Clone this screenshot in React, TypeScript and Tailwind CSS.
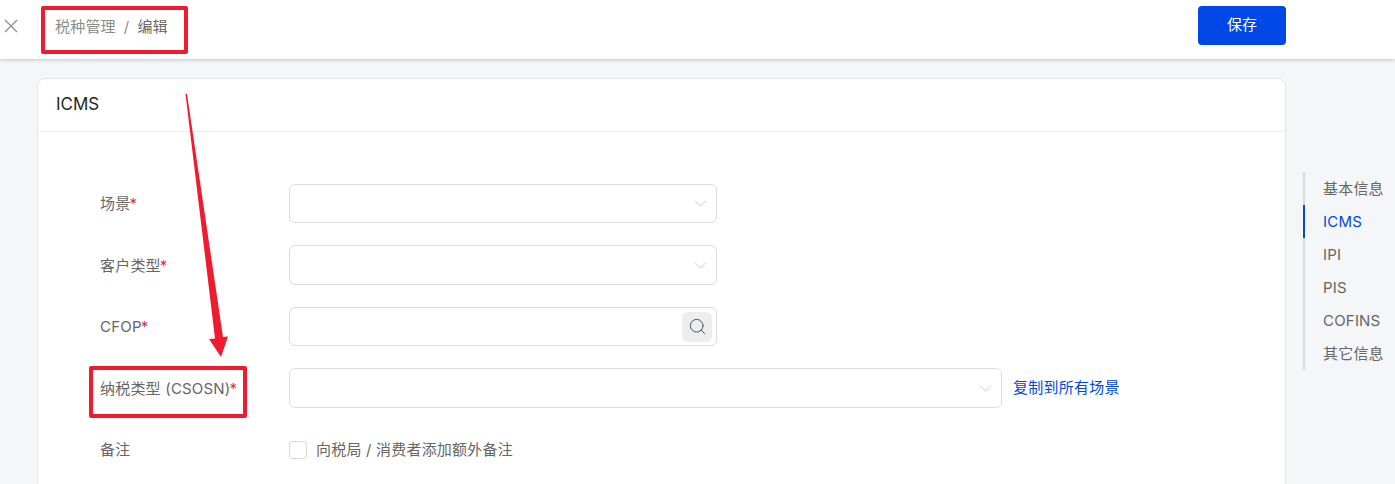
import React from 'react'
import { ChevronDown, Search } from 'lucide-react'

const font = 'font-["Inter","Noto_Sans_CJK_SC",sans-serif]'

function Label({ text }: { text: string }) {
  return (
    <div className="w-[189px] shrink-0 pt-[2px] text-[15px] tracking-[0.2px] text-[#666666]">
      {text}
      <span className="-ml-[1px] text-[#e5294d]">*</span>
    </div>
  )
}

function SelectBox({ wide, tall }: { wide?: boolean; tall?: boolean }) {
  return (
    <div className={`flex items-center justify-end rounded-md border border-[#dcdcdc] bg-white pr-[5px] ${tall ? 'h-[40px]' : 'h-[39px]'} ${wide ? 'w-[713px]' : 'w-[428px]'}`}>
      <ChevronDown className="text-[#c0c4ca]" size={21} strokeWidth={1} />
    </div>
  )
}

function Nav() {
  const items = ['基本信息', 'ICMS', 'IPI', 'PIS', 'COFINS', '其它信息']
  return (
    <div className="ml-[17px] mt-[113px] h-[198px] w-[92px] border-l-2 border-[#d9d9d9]">
      {items.map((item) => (
        <div
          key={item}
          className={`-ml-[2px] flex h-[33px] items-center border-l-2 pl-[18px] pt-[1px] text-[15px] tracking-[0.2px] ${item === 'ICMS' ? 'border-[#0047e6] text-[#0047e6]' : 'border-transparent text-[#666666]'}`}
        >
          {item}
        </div>
      ))}
    </div>
  )
}

export default function App() {
  return (
    <div className={`relative h-[484px] w-[1395px] overflow-hidden bg-[#f5f6f8] ${font}`}>
      {/* Header */}
      <div className="flex h-[59px] items-center bg-white pl-[4px] pr-[109px] shadow-[0_1px_4px_rgba(0,0,0,0.2)]">
        <svg className="mb-[8px]" width="14" height="14" viewBox="0 0 14 14" fill="none" stroke="#8c8c8c" strokeWidth="1.2">
          <path d="M1 1 L13 13 M13 1 L1 13" />
        </svg>
        <div className="mb-[8px] ml-[19px] h-[22px] w-px bg-[#f0f0f0]" />
        <div className="ml-[17px] flex flex-1 items-center gap-[8px] pb-[4px] text-[15px] tracking-[0.2px]">
          <span className="text-[#8c8c8c]">税种管理</span>
          <span className="text-[#8c8c8c]">/</span>
          <span className="text-[#666666]">编辑</span>
        </div>
        <button className="mb-[9px] h-[39px] w-[88px] rounded-[4px] bg-[#0047e6] text-[15px] text-white">保存</button>
      </div>

      <div className="flex pl-[37px]">
        {/* Card */}
        <div className="mt-[19px] h-[500px] w-[1249px] shrink-0 rounded-t-lg border border-[#e5e5e5] bg-white">
          <div className="flex h-[53px] items-center border-b border-[#eeeeee] pl-[18px] text-[17px] text-[#262626]">ICMS</div>
          <div className="pl-[62px] pt-[52px]">
            <div className="flex items-center">
              <Label text="场景" />
              <SelectBox />
            </div>
            <div className="mt-[22px] flex items-center">
              <Label text="客户类型" />
              <SelectBox tall />
            </div>
            <div className="mt-[22px] flex items-center">
              <Label text="CFOP" />
              <div className="flex h-[39px] w-[428px] items-center justify-end rounded-md border border-[#dcdcdc] bg-white pr-[4px]">
                <div className="flex h-[30px] w-[30px] items-center justify-center rounded-md bg-[#ededed]">
                  <Search className="text-[#4a5568]" size={19} strokeWidth={1.25} />
                </div>
              </div>
            </div>
            <div className="mt-[22px] flex items-center">
              <Label text="纳税类型 (CSOSN)" />
              <SelectBox wide tall />
              <a className="ml-[11px] text-[15px] tracking-[0.25px] text-[#0047e6]">复制到所有场景</a>
            </div>
            <div className="mt-[31px] flex items-center">
              <div className="w-[189px] shrink-0 text-[15px] tracking-[0.2px] text-[#666666]">备注</div>
              <div className="h-[18px] w-[18px] rounded-[3px] border border-[#d9d9d9] bg-white" />
              <span className="ml-[9px] text-[15px] tracking-[0.2px] text-[#666666]">向税局 / 消费者添加额外备注</span>
            </div>
          </div>
        </div>
        <Nav />
      </div>

      {/* Annotation marks */}
      <div className="absolute left-[41px] top-[6px] h-[48px] w-[147px] rounded-[2px] border-4 border-[#ee1c2e]" />
      <div className="absolute left-[89px] top-[366px] h-[52px] w-[158px] rounded-[2px] border-4 border-[#ee1c2e]" />
      <svg className="absolute left-0 top-0" width="1395" height="484" fill="none">
        <path d="M185.5 94 L187 94 L223 337 L228 336.5 L221 357 L209 339 L215 338.5 Z" fill="#ee1c2e" />
      </svg>
    </div>
  )
}
